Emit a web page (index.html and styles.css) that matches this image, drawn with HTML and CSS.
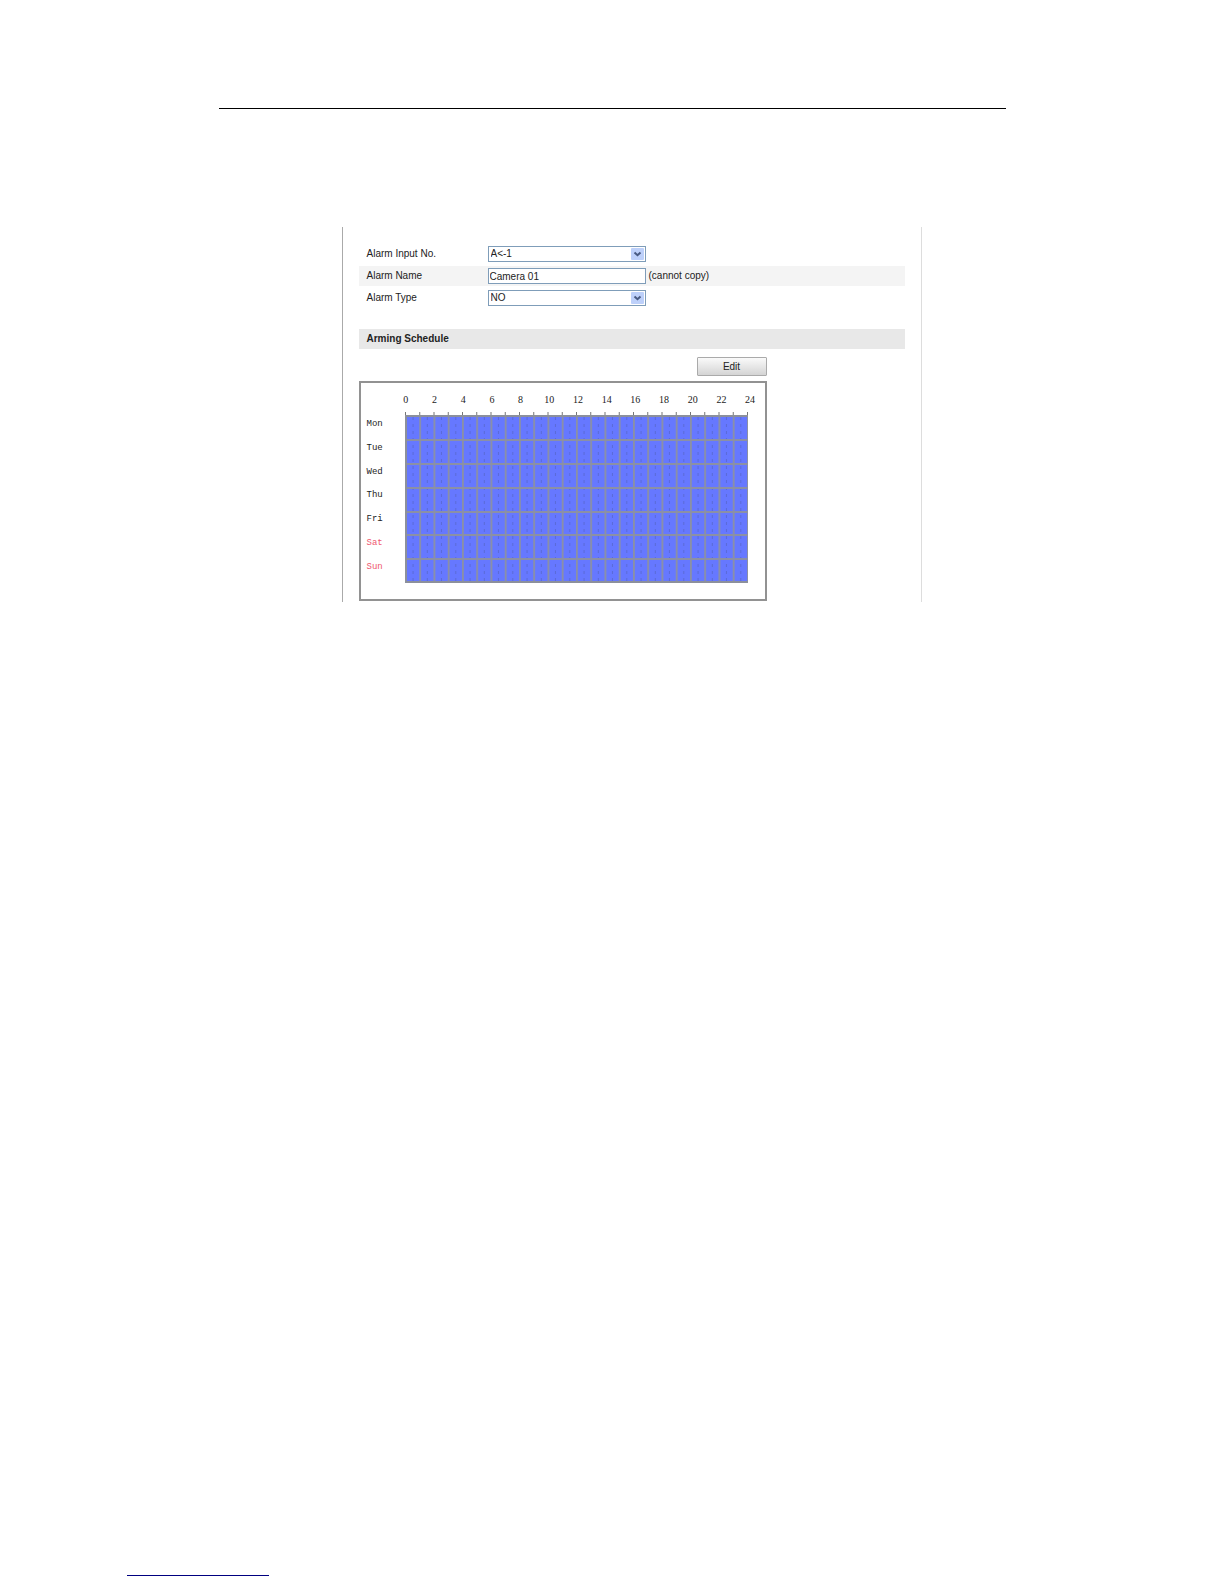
FILE: index.html
```
<!DOCTYPE html>
<html lang="en">
<head>
<meta charset="utf-8">
<title>Alarm Input</title>
<meta name="viewport" content="width=device-width, initial-scale=1">
<link rel="stylesheet" href="styles.css">
</head>
<body>
<div class="page">
  <main class="sheet">
    <hr class="head-rule">
    <form class="panel">
      <div class="row">
        <label for="input-no">Alarm Input No.</label>
        <span class="select">
          <select id="input-no"><option>A&lt;-1</option></select>
          <svg class="arrow" viewBox="0 0 13 12" aria-hidden="true"><rect width="13" height="12" rx="1"/><path d="M3.5 4.5 6.5 7.2 9.5 4.5"/></svg>
        </span>
      </div>
      <div class="row shaded">
        <label for="name">Alarm Name</label>
        <input id="name" type="text" value="Camera 01">
        <span class="note">(cannot copy)</span>
      </div>
      <div class="row">
        <label for="type">Alarm Type</label>
        <span class="select">
          <select id="type"><option>NO</option></select>
          <svg class="arrow" viewBox="0 0 13 12" aria-hidden="true"><rect width="13" height="12" rx="1"/><path d="M3.5 4.5 6.5 7.2 9.5 4.5"/></svg>
        </span>
      </div>
      <h2>Arming Schedule</h2>
      <div class="schedule">
        <button type="button">Edit</button>
        <div class="chart">
          <div class="hours">
            <span>0</span><span>2</span><span>4</span><span>6</span><span>8</span><span>10</span><span>12</span><span>14</span><span>16</span><span>18</span><span>20</span><span>22</span><span>24</span>
          </div>
          <div class="days">
            <span>Mon</span><span>Tue</span><span>Wed</span><span>Thu</span><span>Fri</span><span class="weekend">Sat</span><span class="weekend">Sun</span>
          </div>
          <svg class="grid" viewBox="0 0 343 171" aria-hidden="true">
            <defs>
              <pattern id="hour" width="14.25" height="171" patternUnits="userSpaceOnUse">
                <path class="half" d="M8 5V171"/>
                <path class="line" d="M.8 0V171"/>
              </pattern>
            </defs>
            <rect class="armed" y="3" width="343" height="168"/>
            <rect y="3" width="343" height="168" fill="url(#hour)"/>
            <path class="line" d="M0 28H343M0 52H343M0 76H343M0 100H343M0 123H343M0 147H343"/>
            <path class="edge" d="M0 4H343M0 170H343M1 3V171"/>
            <path class="ticks" d="M0 1.5H343"/>
          </svg>
        </div>
      </div>
    </form>
  </main>
  <footer><hr class="foot-rule"></footer>
</div>
</body>
</html>
```
FILE: styles.css
```
* { box-sizing: border-box; }

body {
  margin: 0;
  background: #fff;
  color: #222;
  font: 10px/16px "Liberation Sans", Arial, sans-serif;
}

.page {
  display: flex;
  flex-direction: column;
  justify-content: space-between;
  min-height: 100vh;
}

.sheet {
  width: 100%;
  max-width: 787px;
  margin: 0 auto;
  padding-top: 108px;
}

footer { padding: 0 0 8px 127px; }

hr { margin: 0; border: 0; height: 1px; }
.head-rule { background: #000; }
.foot-rule { width: 142px; background: #000080; }

.panel {
  margin: 118px 84px 0 123px;
  padding: 16px 16px 1px;
  border-left: 1px solid #aaa;
  border-right: 1px solid #ddd;
}

.row {
  display: flex;
  align-items: center;
  height: 22px;
  padding-left: 8px;
}

.row label { width: 121px; }

.shaded {
  background: linear-gradient(#f4f4f4, #f4f4f4) center / 100% 20px no-repeat;
}

.select {
  display: grid;
  align-items: center;
}

select, input {
  width: 158px;
  height: 16px;
  padding: 0 2px;
  border: 1px solid #7f9db9;
  border-radius: 0;
  outline: 0;
  background: #fff;
  color: #222;
  font: inherit;
  line-height: 14px;
  appearance: none;
}

input { padding: 0 1px; }
select, .arrow { grid-area: 1 / 1; }

.arrow {
  width: 13px;
  height: 12px;
  margin-right: 2px;
  justify-self: end;
  pointer-events: none;
}

.arrow rect { fill: #bdd0fa; }
.arrow path { fill: none; stroke: #485a82; stroke-width: 2; }
.note { margin-left: 3px; }

h2 {
  height: 20px;
  margin: 20px 0 8px;
  padding-left: 8px;
  background: #e8e8e8;
  font-size: 10px;
  line-height: 20px;
}

.schedule {
  display: flex;
  flex-direction: column;
  align-items: flex-end;
  gap: 5px;
  max-width: 408px;
}

button {
  width: 70px;
  height: 19px;
  padding: 0;
  border: 1px solid #aaa;
  border-radius: 1px;
  background: linear-gradient(#fafafa, #d4d4d4);
  color: #222;
  font: inherit;
}

.chart {
  display: grid;
  grid-template-columns: 38px 1fr;
  grid-template-rows: 20px auto;
  width: 100%;
  padding: 9px 17px 16px 6px;
  border: 2px solid #929292;
}

.hours {
  grid-column: 2;
  display: flex;
  margin: 0 -17px 0 -13px;
  font: 10px/16px "Liberation Serif", serif;
  text-align: center;
}

.hours span { flex: 1; }

.days {
  grid-area: 2 / 1;
  display: grid;
  grid-template-rows: repeat(7, 1fr);
  align-items: center;
  padding-bottom: 4px;
  font: 9px/16px "Liberation Mono", monospace;
}

.weekend { color: #ef5870; }

.grid {
  grid-area: 2 / 2;
  width: 100%;
}

.armed { fill: #6678ff; }
.line { fill: none; stroke: #8b90a5; stroke-width: 2; }
.half { fill: none; stroke: #5969d5; stroke-width: 1; stroke-dasharray: 3 4; }
.edge { fill: none; stroke: #8c909c; stroke-width: 2; }
.ticks { fill: none; stroke: #777; stroke-width: 3; stroke-dasharray: 1 13.25; }
```
